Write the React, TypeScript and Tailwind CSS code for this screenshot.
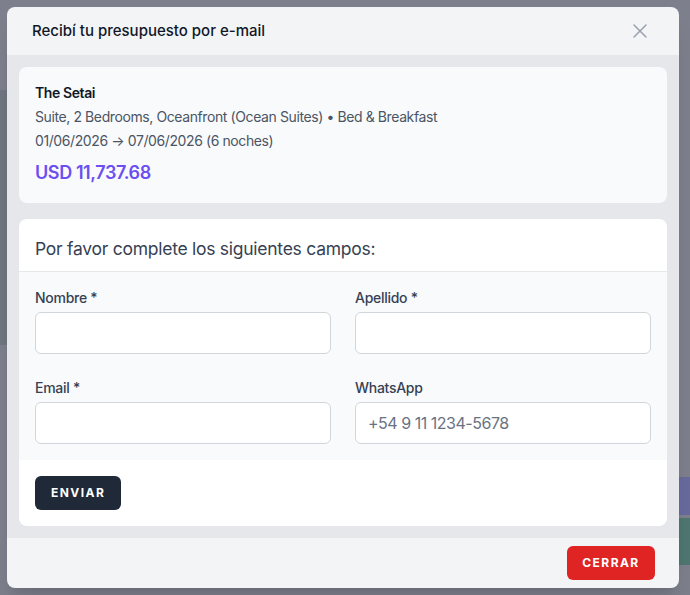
import React from 'react';

const Field: React.FC<{ label: string; placeholder?: string }> = ({ label, placeholder }) => (
  <div className="flex flex-col">
    <label className="mb-1 text-[14px] font-medium leading-5 tracking-[-0.02em] text-gray-700">{label}</label>
    <input
      placeholder={placeholder}
      className="h-[42px] w-full rounded-md border border-gray-300 bg-white px-3 text-[16px] tracking-[-0.03em] text-gray-700 placeholder:text-gray-500 outline-none"
    />
  </div>
);

export default function App() {
  return (
    <div
      className="relative h-[595px] w-[690px] overflow-hidden bg-[#7d808c]"
      style={{ fontFamily: 'Inter, "Noto Sans", sans-serif' }}
    >
      {/* faint page behind the overlay */}
      <div className="absolute left-0 top-[90px] h-[255px] w-[10px] bg-[#6f7680]" />
      <div className="absolute right-0 top-[477px] h-[38px] w-[12px] bg-[#676a9c]" />
      <div className="absolute right-0 top-[518px] h-[47px] w-[12px] bg-[#4f7671]" />

      {/* Modal */}
      <div className="absolute left-[7px] top-[7px] flex h-[581px] w-[672px] flex-col overflow-hidden rounded-lg bg-gray-100 shadow-xl">
        {/* Header */}
        <div className="flex h-[48px] shrink-0 items-center justify-between pl-[25px] pr-[32px]">
          <h3 className="text-[15px] font-medium text-gray-900">
            Recibí tu presupuesto por e-mail
          </h3>
          <svg width="14" height="14" viewBox="0 0 14 14" className="text-gray-400">
            <path d="M1 1 L13 13 M13 1 L1 13" stroke="currentColor" strokeWidth="1.5" strokeLinecap="round" />
          </svg>
        </div>

        {/* Body */}
        <div className="flex shrink-0 flex-col gap-4 bg-gray-200 p-3">
          {/* Summary card */}
          <div className="rounded-lg bg-gray-50 px-4 pt-4 pb-4 tracking-[-0.025em]">
            <p className="text-[14px] font-semibold leading-5 text-gray-900">The Setai</p>
            <p className="mt-1 text-[14px] leading-5 text-gray-600">
              Suite, 2 Bedrooms, Oceanfront (Ocean Suites) • Bed &amp; Breakfast
            </p>
            <p className="mt-1 text-[14px] leading-5 text-gray-600">01/06/2026 → 07/06/2026 (6 noches)</p>
            <p className="mt-2 text-[18px] font-semibold leading-7 text-[#6b4ff0]">USD 11,737.68</p>
          </div>

          {/* Form card */}
          <div className="overflow-hidden rounded-lg bg-white">
            <div className="border-b border-gray-200 px-4 pt-[19px] pb-[11px]">
              <h4 className="text-[17.5px] leading-[22px] tracking-[-0.015em] text-gray-700">
                Por favor complete los siguientes campos:
              </h4>
            </div>
            <div className="grid grid-cols-2 gap-x-6 gap-y-6 bg-gray-50 px-4 pt-4 pb-4">
              <Field label="Nombre *" />
              <Field label="Apellido *" />
              <Field label="Email *" />
              <Field label="WhatsApp" placeholder="+54 9 11 1234-5678" />
            </div>
            <div className="px-4 py-4">
              <button className="h-[34px] rounded-md bg-[#1f2937] px-4 text-[12px] font-bold tracking-[0.12em] text-white">
                ENVIAR
              </button>
            </div>
          </div>
        </div>

        {/* Footer */}
        <div className="flex flex-1 items-center justify-end pr-6">
          <button className="h-[34px] w-[88px] rounded-md bg-[#e02424] text-[12px] font-bold tracking-[0.12em] text-white">
            CERRAR
          </button>
        </div>
      </div>
    </div>
  );
}
